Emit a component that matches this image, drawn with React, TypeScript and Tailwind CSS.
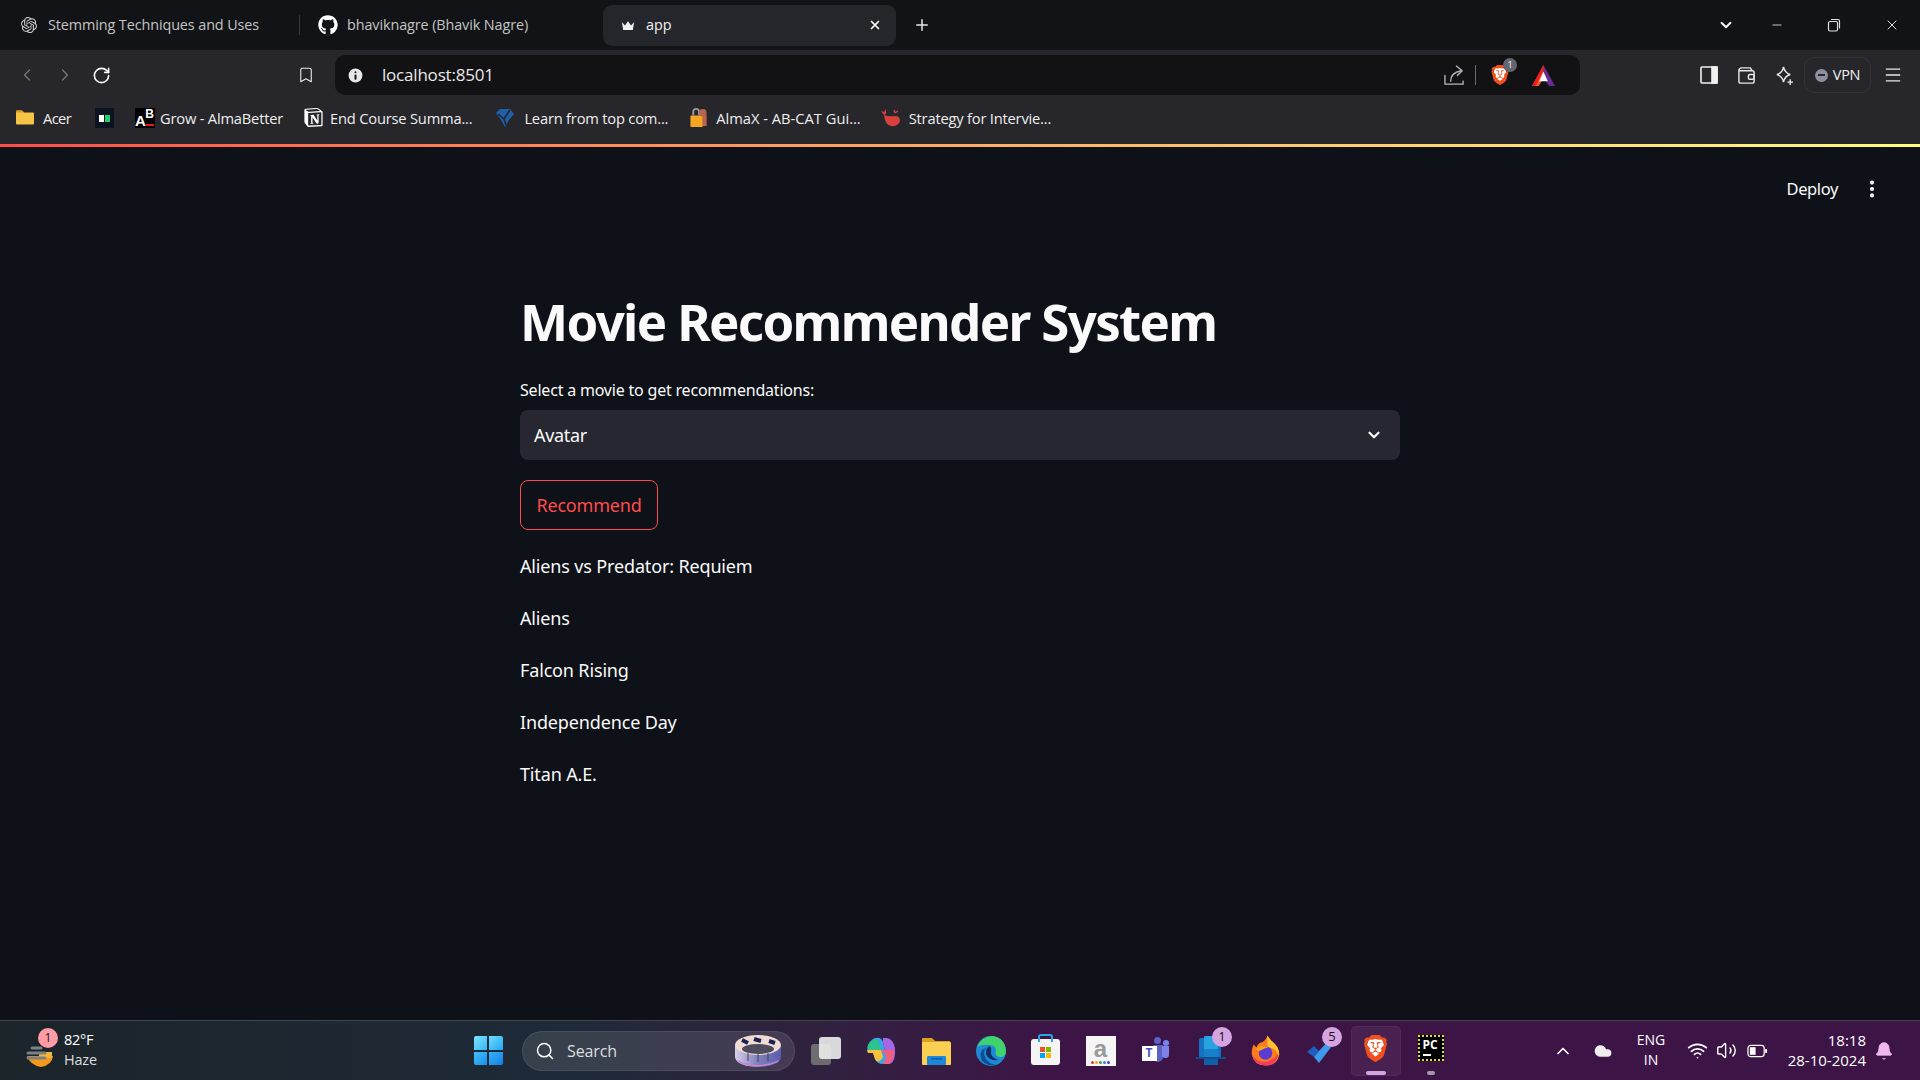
import { ChevronDown, ChevronLeft, ChevronRight, ChevronUp, Minus, Plus, RotateCw, X, Bookmark, Info, Search, MoreVertical, Menu, Wifi, Volume2, Bell, Cloud } from 'lucide-react';
import { FaGithub } from 'react-icons/fa';
import { SiOpenai, SiNotion, SiBrave } from 'react-icons/si';

const UI = 'font-["Open_Sans",sans-serif]';
const ST = 'font-["Noto_Sans",sans-serif]';

function BraveIcon({ className }: { className: string }) {
  return (
    <div className={`relative ${className}`}>
      <svg viewBox="0 0 24 28" className="absolute inset-0 w-full h-full"><path d="M6 5 H18 L20 12 L15 22 H9 L4 12 Z" fill="#fff" /></svg>
      <SiBrave className="absolute inset-0 w-full h-full text-[#f1501e]" />
    </div>
  );
}

function Bm({ icon, label, textClass }: { icon: React.ReactNode; label: string; textClass: string }) {
  return (
    <div className="flex items-center">
      {icon}
      <span className={`text-[14.7px] text-[#eeeeee] whitespace-nowrap ${textClass}`}>{label}</span>
    </div>
  );
}

function TabBar() {
  return (
    <div className={`h-[50px] bg-[#121316] flex items-center pl-[21px] pr-[20px] text-[14.4px] ${UI}`}>
      <SiOpenai className="w-[16px] h-[16px] text-[#d0d0d0]" />
      <span className="ml-[11px] w-[251px] text-[#c4c4c4] whitespace-nowrap tracking-[-0.1px]">Stemming Techniques and Uses</span>
      <div className="w-px h-[20px] bg-[#3c3c40]" />
      <FaGithub className="ml-[18px] w-[20px] h-[20px] text-white" />
      <span className="ml-[9px] w-[256px] text-[#c4c4c4] whitespace-nowrap tracking-[-0.1px]">bhaviknagre (Bhavik Nagre)</span>
      <div className="w-[293px] h-[41px] bg-[#25262b] rounded-[9px] flex items-center pl-[18px] pr-[14px]">
        <svg viewBox="0 0 16 12" className="w-[14px] h-[11px]"><path d="M1 2 L4.5 6 L8 1 L11.5 6 L15 2 L13.5 11 H2.5 Z" fill="#f2f2f2" /></svg>
        <span className="ml-[11px] text-[#f2f2f2] flex-1">app</span>
        <X className="w-[14px] h-[14px] text-white" strokeWidth={3} />
      </div>
      <Plus className="ml-[17px] w-[18px] h-[18px] text-[#e8e8e8]" strokeWidth={2} />
      <div className="flex-1" />
      <ChevronDown className="w-[18px] h-[18px] text-white" strokeWidth={2.5} />
      <Minus className="ml-[35px] w-[14px] h-[14px] text-[#e0e0e0]" strokeWidth={1.5} />
      <svg viewBox="0 0 14 14" className="ml-[43px] w-[14px] h-[14px]" fill="none" stroke="#e0e0e0" strokeWidth="1.2"><rect x="1.5" y="3.5" width="9" height="9.5" rx="1.5" /><path d="M4 1.5 H11 Q12.5 1.5 12.5 3 V10.5" /></svg>
      <X className="ml-[43px] w-[16px] h-[16px] text-[#e0e0e0]" strokeWidth={1.5} />
    </div>
  );
}

function ToolBar() {
  return (
    <div className={`h-[50px] bg-[#26262b] flex items-center pl-[17px] pr-[17px] ${UI}`}>
      <ChevronLeft className="shrink-0 w-[20px] h-[20px] text-[#77777c]" strokeWidth={1.5} />
      <ChevronRight className="shrink-0 ml-[18px] w-[20px] h-[20px] text-[#77777c]" strokeWidth={1.5} />
      <RotateCw className="shrink-0 ml-[17px] w-[19px] h-[19px] text-white" strokeWidth={2} />
      <Bookmark className="shrink-0 ml-[186px] w-[18px] h-[20px] text-[#e8e8e8]" strokeWidth={1.5} />
      <div className="ml-[20px] flex-1 h-[40px] bg-[#121214] rounded-[10px] flex items-center pl-[11px] pr-[25px]">
        <Info className="w-[19px] h-[19px] text-[#121214] fill-[#e8e8e8]" strokeWidth={2.5} />
        <span className="ml-[17px] text-[17px] text-[#e8e8e8] tracking-[-0.2px] flex-1">localhost:8501</span>
        <svg viewBox="0 0 22 22" className="w-[21px] h-[21px]" fill="none" stroke="#b8b8b8" strokeWidth="1.4" strokeLinecap="round">
          <path d="M1 11 V20 H20 V17" />
          <path d="M7 17 Q7 8 18 6" />
          <path d="M13 1 L19 6 L14 11" />
        </svg>
        <div className="ml-[10px] w-px h-[20px] bg-[#6b6b6f]" />
        <div className="relative ml-[14px] w-[20px] h-[24px]">
          <BraveIcon className="w-[20px] h-[24px]" />
          <div className="absolute -top-[5px] -right-[7px] w-[14px] h-[14px] rounded-full bg-[#63656f] text-white text-[9px] flex items-center justify-center">1</div>
        </div>
        <svg viewBox="0 0 24 22" className="ml-[22px] w-[23px] h-[21px]">
          <path d="M12 0 L24 22 H18 L12 14 Z" fill="#662d91" />
          <path d="M12 0 L0 22 H7 L12 14 Z" fill="#f15a29" />
          <path d="M12 0 L0 22 H4 L12 5 Z" fill="#ed1c24" />
          <path d="M12 7 L16.5 17 H7.5 Z" fill="#fff" />
        </svg>
      </div>
      <svg viewBox="0 0 18 18" className="shrink-0 ml-[120px] w-[18px] h-[18px]" fill="none" stroke="#f0f0f0" strokeWidth="1.6"><rect x="1" y="1" width="16" height="16" rx="1" /><rect x="12" y="1" width="5" height="16" fill="#f0f0f0" /></svg>
      <svg viewBox="0 0 20 20" className="shrink-0 ml-[19px] w-[19px] h-[19px]" fill="none" stroke="#e8e8e8" strokeWidth="1.5"><path d="M2 5 Q2 2 5 2 H14 L16 5 M2 5 H16 Q18 5 18 7 V16 Q18 18 16 18 H4 Q2 18 2 16 Z" /><rect x="12" y="9" width="6" height="5" rx="1.5" /></svg>
      <svg viewBox="0 0 20 22" className="shrink-0 ml-[19px] w-[19px] h-[21px]" fill="none" stroke="#e8e8e8" strokeWidth="1.5"><path d="M9 2 C10 7 12 9 16 10 C12 11 10 13 9 18 C8 13 6 11 2 10 C6 9 8 7 9 2 Z" /><path d="M16 15 V21 M13 18 H19" /></svg>
      <div className="shrink-0 ml-[10px] w-[67px] h-[36px] rounded-[10px] border border-[#33343a] flex items-center justify-center">
        <div className="w-[13px] h-[13px] rounded-full bg-[#8e90a0] flex items-center justify-center"><div className="w-[7px] h-[2px] bg-[#26262b]" /></div>
        <span className="ml-[5px] text-[14.5px] tracking-[-0.3px] text-[#f0f0f0]">VPN</span>
      </div>
      <Menu className="shrink-0 ml-[12px] w-[20px] h-[20px] text-[#e8e8e8]" strokeWidth={1.6} />
    </div>
  );
}

function BookmarkBar() {
  return (
    <div className={`h-[44px] bg-[#26262b] flex items-center pl-[15px] pb-[8px] ${UI}`}>
      <Bm label="Acer" textClass="ml-[8px] w-[31px] tracking-[-0.6px]" icon={<svg viewBox="0 0 20 16" className="w-[20px] h-[17px]"><path d="M1 2 Q1 1 2 1 H7 L9 3 H18 Q19 3 19 4 V14 Q19 15 18 15 H2 Q1 15 1 14 Z" fill="#f5c445" /><path d="M1 2 Q1 1 2 1 H7 L9 3 H1 Z" fill="#d99b1e" /></svg>} />
      <div className="ml-[21px] w-[19px] h-[20px] bg-[#0b1220] flex items-center justify-center gap-px">
        <div className="w-[5px] h-[7px] bg-white" />
        <div className="w-[5px] h-[7px] bg-[#22d36a]" />
      </div>
      <Bm label="Grow - AlmaBetter" textClass="ml-[5px] tracking-[-0.2px]" icon={
        <div className="ml-[21px] w-[20px] h-[20px] bg-black text-white font-['Liberation_Sans',sans-serif] font-bold flex relative overflow-hidden">
          <span className="absolute left-0 bottom-0 text-[15px] leading-[15px]">A</span>
          <span className="absolute right-[1px] top-0 text-[12px] leading-[13px]">B</span>
          <div className="absolute bottom-[2px] right-[1px] w-[8px] h-[2px] bg-[#e02020]" />
        </div>} />
      <Bm label="End Course Summa..." textClass="ml-[7px] tracking-[-0.2px]" icon={<SiNotion className="ml-[21px] w-[19px] h-[19px] text-white" />} />
      <Bm label="Learn from top com..." textClass="ml-[9px] tracking-[-0.2px]" icon={
        <svg viewBox="0 0 20 20" className="ml-[23px] w-[20px] h-[20px]"><path d="M1 5 L5 1 H15 L19 6 L14 12 L10 19 L6 12 Z" fill="#1e5fa8" /><path d="M3 6 L9 11 M9 11 L15 2 M9 11 L11 17" stroke="#26262b" strokeWidth="1.6" /></svg>} />
      <Bm label="AlmaX - AB-CAT Gui..." textClass="ml-[7px] tracking-[0px]" icon={
        <svg viewBox="0 0 20 22" className="ml-[21px] w-[20px] h-[21px]"><rect x="1" y="9" width="13" height="12" rx="1" fill="#f6a623" /><path d="M4 9 V5 Q4 2 7 2 Q10 2 10 5 V9" fill="none" stroke="#9a9a9a" strokeWidth="2" /><circle cx="14" cy="6" r="4" fill="#b8644e" /><rect x="14" y="8" width="4" height="12" fill="#b8644e" /></svg>} />
      <Bm label="Strategy for Intervie..." textClass="ml-[8px] tracking-[-0.2px]" icon={
        <svg viewBox="0 0 20 20" className="ml-[20px] w-[20px] h-[20px]"><path d="M3 7 Q8 9 14 8 Q19 8 19 13 Q17 19 10 18 Q4 17 3 7 Z" fill="#d8403f" /><path d="M3 7 L0 3 L3 4 L5 1 L5 6 Z" fill="#d8403f" /><path d="M14 5 L13 2 M14 5 L17 3" stroke="#d8403f" strokeWidth="1.5" /></svg>} />
    </div>
  );
}

function Streamlit() {
  const items = ['Aliens vs Predator: Requiem', 'Aliens', 'Falcon Rising', 'Independence Day', 'Titan A.E.'];
  return (
    <div className={`flex-1 bg-[#0e1117] relative ${ST} text-[#fafafa]`}>
      <div className="absolute top-[30px] right-[37px] flex items-center">
        <span className="text-[16.5px] tracking-[-0.4px]">Deploy</span>
        <MoreVertical className="ml-[23px] w-[22px] h-[22px]" strokeWidth={2.5} />
      </div>
      <div className="ml-[520px] w-[880px] pt-[136px]">
        <h1 className="text-[51px] leading-[76px] font-bold tracking-[-1.65px] whitespace-nowrap">Movie Recommender System</h1>
        <div className="mt-[19px] text-[16px] leading-[24px] tracking-[-0.2px]">Select a movie to get recommendations:</div>
        <div className="mt-[8px] h-[50px] rounded-[8px] bg-[#262730] flex items-center justify-between pl-[14px] pr-[17px]">
          <span className="text-[18px] tracking-[-0.3px]">Avatar</span>
          <ChevronDown className="w-[18px] h-[18px]" strokeWidth={3} />
        </div>
        <button className="mt-[20px] block w-[138px] h-[50px] rounded-[8px] border border-[#ff4b4b] text-[#ff4b4b] text-[18px] tracking-[-0.2px]">Recommend</button>
        <div className="mt-[10px] flex flex-col">
          {items.map((t) => (
            <div key={t} className="h-[52px] flex items-center text-[18px] tracking-[-0.15px]">{t}</div>
          ))}
        </div>
      </div>
    </div>
  );
}

function NumBadge({ n, cls }: { n: string; cls: string }) {
  return <div className={`absolute w-[20px] h-[20px] rounded-full bg-[#d4a5e0] text-[#1a1020] text-[13px] flex items-center justify-center ${cls}`}>{n}</div>;
}

function Slot({ children }: { children: React.ReactNode }) {
  return <div className="relative w-[55px] h-[59px] flex items-center justify-center">{children}</div>;
}

function TaskBar() {
  return (
    <div className={`h-[60px] border-t border-[#45434b] bg-gradient-to-r from-[#1b2429] via-[#1e2a38] via-30% to-[#3d1446] to-55% flex items-center ${UI} text-white`}>
      {/* weather */}
      <div className="relative w-[468px] pl-[25px] flex items-center h-full">
        <svg viewBox="0 0 30 30" className="w-[30px] h-[30px] mt-[6px]">
          <path d="M2 17 H28 Q27 26 16 28 Q5 26 2 17 Z" fill="#f39a1c" />
          <path d="M14 13 H27 V19 H14 Z" fill="#f5b53a" />
          <path d="M7 9 H16 M3 14 H20 M3 19 H20" stroke="#7b8186" strokeWidth="3" strokeLinecap="round" />
        </svg>
        <div className="absolute left-[38px] top-[7px] w-[20px] h-[20px] rounded-full bg-[#ff9ca5] text-[#1a1a1a] text-[12px] flex items-center justify-center">1</div>
        <div className="ml-[9px] pb-[2px] text-[14.5px] leading-[20px]">
          <div className="tracking-[-0.3px]">82°F</div>
          <div className="text-[#dddddd] tracking-[-0.2px]">Haze</div>
        </div>
      </div>
      <div className="w-[40px] flex justify-center">
        <div className="grid grid-cols-2 gap-[2px] w-[29px] h-[29px]">
          <div className="bg-gradient-to-br from-[#7ce4ff] to-[#33b8f5] rounded-tl-[2px]" />
          <div className="bg-gradient-to-br from-[#6adcff] to-[#1fa8f5] rounded-tr-[2px]" />
          <div className="bg-gradient-to-br from-[#41c0fa] to-[#1590ee] rounded-bl-[2px]" />
          <div className="bg-gradient-to-br from-[#36b4f8] to-[#0f7fe5] rounded-br-[2px]" />
        </div>
      </div>
      {/* search */}
      <div className="ml-[14px] w-[273px] h-[40px] rounded-full bg-[#ffffff1c] border border-[#ffffff14] flex items-center pl-[12px] pr-[12px]">
        <Search className="w-[20px] h-[20px] text-white" strokeWidth={1.8} />
        <span className="ml-[12px] text-[16px] text-[#dedede] flex-1 tracking-[-0.1px]">Search</span>
        <svg viewBox="0 0 48 32" className="w-[48px] h-[32px]">
          <defs>
            <linearGradient id="pearlBand" x1="0" y1="0" x2="1" y2="0">
              <stop offset="0" stopColor="#d9cdea" />
              <stop offset="0.5" stopColor="#7f7fb8" />
              <stop offset="1" stopColor="#5a5db0" />
            </linearGradient>
          </defs>
          <path d="M1 10 V22 Q2 31 24 32 Q46 31 47 22 V10 Z" fill="url(#pearlBand)" />
          <ellipse cx="24" cy="10" rx="23" ry="10" fill="#f0dcd3" />
          <ellipse cx="24" cy="14" rx="16" ry="5" fill="#4e4c5c" />
          <path d="M8 5 L14 8 M20 4 L27 6 M35 6 L41 8" stroke="#1c2254" strokeWidth="4" />
          <path d="M14 18 V26 M24 19 V27 M34 18 V26" stroke="#3f4060" strokeWidth="1" />
          <path d="M3 25 Q24 35 45 25 L44 27 Q24 36 4 27 Z" fill="#c47fe0" />
        </svg>
      </div>
      {/* apps */}
      <div className="ml-[3px] flex items-center">
        <Slot>
          <div className="relative w-[30px] h-[28px]">
            <div className="absolute left-0 bottom-0 w-[20px] h-[21px] rounded-[3px] bg-[#6d6d70]" />
            <div className="absolute right-0 top-0 w-[22px] h-[22px] rounded-[3px] bg-[#ececec] opacity-90" />
          </div>
        </Slot>
        <Slot>
          <svg viewBox="0 0 30 28" className="w-[30px] h-[28px]">
            <path d="M10 1 Q15 0 17 5 L21 22 Q22 27 17 27 Q11 27 9 22 L7 16 H2 Q0 9 4 5 Q7 1 10 1 Z" fill="#3fa3e8" />
            <path d="M3 6 Q8 1 12 3 L15 13 H2 Q1 9 3 6 Z" fill="#2bc48a" />
            <path d="M1 13 H15 L17 20 Q12 28 9 22 L7 16 H2 Z" fill="#f5c23a" />
            <path d="M17 1 H21 Q27 2 29 11 Q30 24 24 27 H17 Q21 24 20 18 L17 5 Z" fill="#a765e8" />
            <path d="M15 13 H28 Q29 22 23 27 H16 Q22 24 19 17 Z" fill="#ef5f80" />
          </svg>
        </Slot>
        <Slot>
          <svg viewBox="0 0 30 28" className="w-[30px] h-[28px]">
            <path d="M1 2 Q1 1 2 1 H11 L14 4 H29 V8 H1 Z" fill="#dba21f" />
            <rect x="1" y="5" width="29" height="23" rx="1" fill="#fbd052" />
            <rect x="6" y="19" width="19" height="9" rx="1" fill="#1e88d8" />
            <rect x="10" y="21" width="11" height="1.6" fill="#0b5fa6" />
          </svg>
        </Slot>
        <Slot>
          <svg viewBox="0 0 30 30" className="w-[30px] h-[30px]">
            <circle cx="15" cy="15" r="15" fill="#1e8ad6" />
            <path d="M1 11 Q6 0 17 0 Q29 2 30 15 Q30 21 24 21 Q18 20 20 15 Q20 9 13 9 Q6 8 1 11 Z" fill="#3fd26d" />
            <path d="M13 10 Q6 13 9 21 Q12 28 21 29 Q13 31 6 25 Q3 19 6 14 Z" fill="#0c4f96" />
            <path d="M13 10 Q8 15 11 20 Q14 25 22 24 Q14 21 15 15 Q16 11 13 10 Z" fill="#0f2f66" />
          </svg>
        </Slot>
        <Slot>
          <div className="relative w-[29px] h-[26px] mt-[3px] rounded-[3px] bg-[#f4f4f4]">
            <div className="absolute -top-[5px] left-[7px] w-[15px] h-[8px] border-2 border-b-0 border-[#25a7ea] rounded-t-[3px]" />
            <div className="absolute left-[9px] top-[8px] grid grid-cols-2 gap-px w-[11px] h-[11px]">
              <div className="bg-[#f25022]" /><div className="bg-[#7fba00]" /><div className="bg-[#00a4ef]" /><div className="bg-[#ffb900]" />
            </div>
          </div>
        </Slot>
        <Slot>
          <div className="w-[30px] h-[30px] bg-[#f5f5f5] flex flex-col items-center justify-between pb-[2px]">
            <span className="text-[24px] leading-[25px] text-[#9a9a9a] font-bold font-['Liberation_Sans',sans-serif]">a</span>
            <div className="flex gap-[1px]">
              <div className="w-[3px] h-[3px] rounded-full bg-[#e53935]" /><div className="w-[3px] h-[3px] rounded-full bg-[#f6a623]" /><div className="w-[3px] h-[3px] rounded-full bg-[#43a047]" /><div className="w-[3px] h-[3px] rounded-full bg-[#1e88e5]" /><div className="w-[3px] h-[3px] rounded-full bg-[#5e35b1]" />
            </div>
          </div>
        </Slot>
        <Slot>
          <div className="relative w-[28px] h-[28px]">
            <div className="absolute left-[21px] top-[3px] w-[6px] h-[6px] rounded-full bg-[#7b83eb]" />
            <div className="absolute left-[12px] top-0 w-[7px] h-[7px] rounded-full bg-[#5b62c4]" />
            <div className="absolute left-[11px] top-[8px] w-[10px] h-[17px] rounded-b-[5px] bg-[#5b62c4]" />
            <div className="absolute left-[20px] top-[9px] w-[7px] h-[12px] rounded-b-[4px] bg-[#7b83eb]" />
            <div className="absolute left-0 top-[9px] w-[15px] h-[15px] bg-white text-[#4b53bc] text-[12px] font-bold flex items-center justify-center leading-none">T</div>
          </div>
        </Slot>
        <Slot>
          <svg viewBox="0 0 30 32" className="w-[30px] h-[32px]">
            <rect x="3" y="3" width="22" height="20" rx="2" fill="#1273c4" />
            <rect x="8" y="1" width="14" height="27" rx="1" fill="#29a3e0" />
            <rect x="8" y="14" width="14" height="8" fill="#1780c9" />
            <rect x="8" y="22" width="14" height="8" fill="#0f5fa8" />
            <rect x="0" y="22" width="30" height="2" fill="#0c4f8c" />
          </svg>
          <NumBadge n="1" cls="top-[6px] right-[6px]" />
        </Slot>
        <Slot>
          <svg viewBox="0 0 30 32" className="w-[29px] h-[32px]">
            <path d="M17 0 Q20 5 24 8 Q30 14 29 21 Q27 31 15 31 Q3 31 1 20 Q0 14 3 9 Q4 12 6 12 Q7 8 11 7 Q15 6 17 0 Z" fill="#ff7a1a" />
            <path d="M17 0 Q20 5 24 8 Q30 14 29 21 Q25 12 17 12 Z" fill="#ffc22e" />
            <circle cx="15" cy="18" r="7" fill="#5c3bd0" />
            <path d="M5 14 Q10 9 18 12 Q13 13 11 15 Q8 17 5 14 Z" fill="#ffa11f" />
            <path d="M1 20 Q6 28 15 27 Q23 26 28 19 Q27 31 15 31 Q3 31 1 20 Z" fill="#f23e5e" />
          </svg>
        </Slot>
        <Slot>
          <svg viewBox="0 0 30 24" className="w-[30px] h-[24px]">
            <path d="M1 13 L8 7 L13 12 L8 18 Z" fill="#1f5fc0" />
            <path d="M8 18 L13 24 L29 3 L24 0 L13 12 Z" fill="#3d9bea" />
          </svg>
          <NumBadge n="5" cls="top-[6px] right-[6px]" />
        </Slot>
        <Slot>
          <div className="w-[50px] h-[50px] rounded-[5px] bg-[#ffffff0f] border border-[#ffffff0a] flex items-center justify-center">
            <BraveIcon className="w-[27px] h-[31px] -mt-[4px]" />
          </div>
          <div className="absolute bottom-[5px] w-[20px] h-[4px] rounded-full bg-[#d3a4e2]" />
        </Slot>
        <Slot>
          <div className="w-[26px] h-[26px] -mt-[5px] border-[2px] border-dotted border-[#d9e021] bg-black text-white text-[12px] font-bold leading-none pt-[2px] pl-[3px]">
            PC
            <div className="mt-[3px] w-[8px] h-[2px] bg-white" />
          </div>
          <div className="absolute bottom-[5px] w-[8px] h-[4px] rounded-full bg-[#a39aa8]" />
        </Slot>
      </div>
      {/* tray */}
      <div className="flex-1" />
      <ChevronUp className="w-[20px] h-[20px] text-white" strokeWidth={2} />
      <Cloud className="ml-[19px] w-[22px] h-[20px] text-[#eeeeee] fill-[#eeeeee]" strokeWidth={0} />
      <div className="ml-[19px] pb-[2px] w-[36px] text-[14px] leading-[20px] text-center">ENG<br />IN</div>
      <Wifi className="ml-[18px] w-[21px] h-[21px] text-white" strokeWidth={2} />
      <Volume2 className="ml-[8px] w-[21px] h-[21px] text-white" strokeWidth={1.6} />
      <svg viewBox="0 0 22 14" className="ml-[10px] w-[21px] h-[14px]" fill="none" stroke="#fff" strokeWidth="1.3"><rect x="1" y="1" width="17" height="12" rx="3" /><rect x="3" y="3" width="6" height="8" fill="#fff" stroke="none" /><path d="M20 5 V9" strokeWidth="2" /></svg>
      <div className="ml-[10px] pb-[2px] w-[88px] text-right text-[15px] leading-[20px] whitespace-nowrap">18:18<br />28-10-2024</div>
      <Bell className="ml-[8px] mr-[26px] w-[20px] h-[20px] text-[#efb8ee] fill-[#efb8ee]" strokeWidth={1} />
    </div>
  );
}

export default function App() {
  return (
    <div className="w-[1920px] h-[1080px] flex flex-col overflow-hidden">
      <TabBar />
      <ToolBar />
      <BookmarkBar />
      <div className="h-[3px] bg-gradient-to-r from-[#ff4b4b] to-[#fffd80]" />
      <Streamlit />
      <TaskBar />
    </div>
  );
}
